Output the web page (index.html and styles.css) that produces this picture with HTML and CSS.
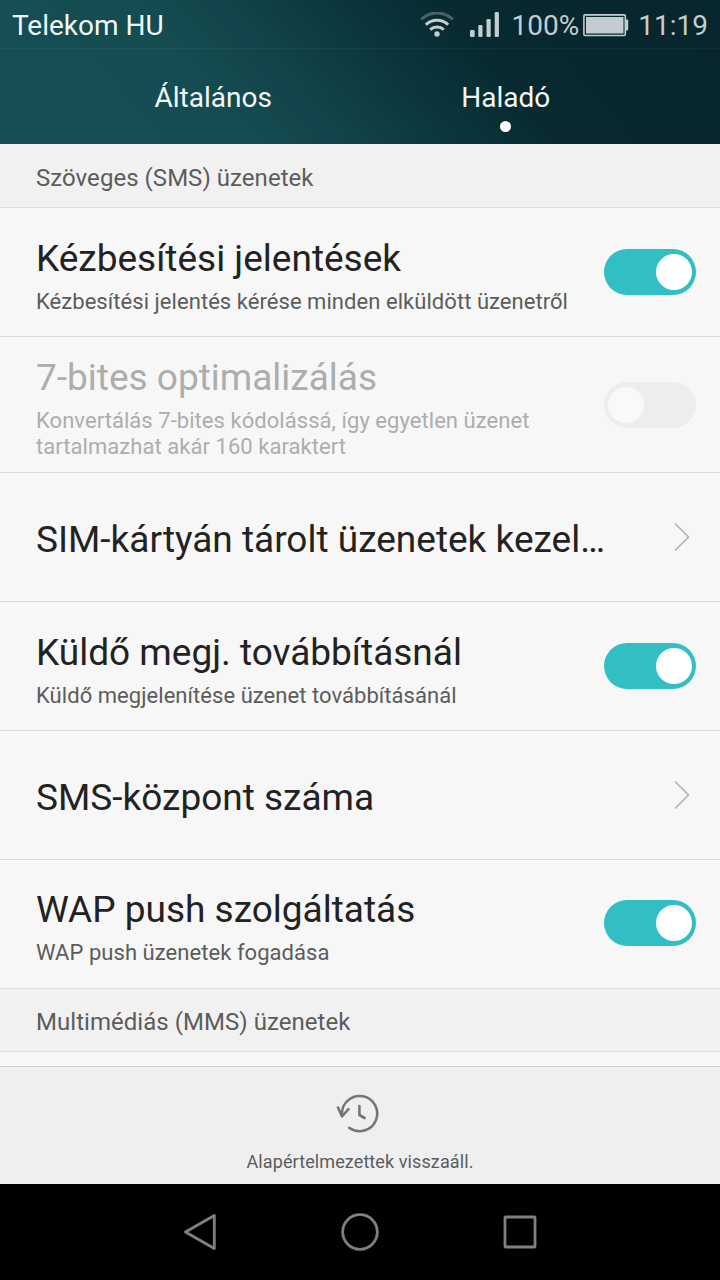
FILE: index.html
```html
<!DOCTYPE html>
<html lang="hu">
  <head>
    <meta charset="UTF-8" />
    <meta name="viewport" content="width=device-width, initial-scale=1.0" />
    <title>Haladó</title>
    <link rel="stylesheet" href="styles.css">
  </head>
  <body>
    <header class="top">
      <div class="status-bar">
        <span class="carrier">Telekom HU</span>
        <svg class="wifi" width="34" height="26" viewBox="0 0 34 26" fill="none" stroke="#c3cdd0" stroke-width="3">
          <path d="M1.2 7.5a22.5 22.5 0 0 1 31.6 0" stroke="#4a6267" />
          <path d="M5.8 12.7a16 16 0 0 1 22.4 0" />
          <path d="M10.2 17.6a10 10 0 0 1 13.6 0" />
          <circle cx="17" cy="22" r="2.7" fill="#c3cdd0" stroke="none" />
        </svg>
        <svg class="signal" width="30" height="26" viewBox="0 0 30 26" fill="#c3cdd0">
          <rect x="0" y="18" width="4.6" height="7" rx="1.2" />
          <rect x="8.3" y="13" width="4.2" height="12" rx="1.2" />
          <rect x="16.5" y="7" width="4.2" height="18" rx="1.2" />
          <rect x="24.7" y="0" width="4.2" height="25" rx="1.2" />
        </svg>
        <span class="percent">100%</span>
        <svg class="battery" width="46" height="23" viewBox="0 0 46 23">
          <rect x="0.9" y="0.9" width="41.4" height="20.6" rx="1" fill="none" stroke="#c3cdd0" stroke-width="1.6" />
          <rect x="3" y="3" width="37.5" height="16.5" fill="#c3cdd0" />
          <path d="M43 5.5h1.2q1 0 1 1v9q0 1-1 1H43z" fill="#c3cdd0" />
        </svg>
        <span class="clock">11:19</span>
      </div>
      <nav class="tabs">
        <a class="tab">Általános</a>
        <a class="tab active">Haladó</a>
      </nav>
    </header>

    <main class="list">
      <h2 class="section">Szöveges (SMS) üzenetek</h2>

      <div class="row">
        <div class="text">
          <div class="title">Kézbesítési jelentések</div>
          <div class="summary">Kézbesítési jelentés kérése minden elküldött üzenetről</div>
        </div>
        <span class="switch on"></span>
      </div>

      <div class="row tall disabled">
        <div class="text">
          <div class="title">7-bites optimalizálás</div>
          <div class="summary">Konvertálás 7-bites kódolássá, így egyetlen üzenet tartalmazhat akár 160 karaktert</div>
        </div>
        <span class="switch"></span>
      </div>

      <div class="row link">
        <div class="title">SIM-kártyán tárolt üzenetek kezel…</div>
        <svg class="chevron" width="18" height="30" viewBox="0 0 18 30">
          <path d="M2 1.5L15.5 15L2 28.5" />
        </svg>
      </div>

      <div class="row">
        <div class="text">
          <div class="title">Küldő megj. továbbításnál</div>
          <div class="summary">Küldő megjelenítése üzenet továbbításánál</div>
        </div>
        <span class="switch on"></span>
      </div>

      <div class="row link">
        <div class="title">SMS-központ száma</div>
        <svg class="chevron" width="18" height="30" viewBox="0 0 18 30">
          <path d="M2 1.5L15.5 15L2 28.5" />
        </svg>
      </div>

      <div class="row last">
        <div class="text">
          <div class="title">WAP push szolgáltatás</div>
          <div class="summary">WAP push üzenetek fogadása</div>
        </div>
        <span class="switch on"></span>
      </div>

      <h2 class="section last">Multimédiás (MMS) üzenetek</h2>
    </main>

    <footer class="toolbar">
      <svg class="restore" width="44" height="42" viewBox="0 0 44 42" fill="none" stroke="#757575" stroke-width="2.6" stroke-linecap="round" stroke-linejoin="round">
        <path d="M6 21A17.6 17.6 0 1 1 13.2 34.8" />
        <path d="M2 14.5L6 23.5L12.5 16.2" />
        <path d="M23.4 13V22L28.6 25" />
      </svg>
      <span>Alapértelmezettek visszaáll.</span>
    </footer>

    <div class="nav-bar">
      <svg width="40" height="40" viewBox="0 0 40 40">
        <path d="M34.3 3.5V36.5L5.5 20z" />
      </svg>
      <svg width="40" height="40" viewBox="0 0 40 40">
        <circle cx="20" cy="20" r="17.3" />
      </svg>
      <svg width="40" height="40" viewBox="0 0 40 40">
        <rect x="5" y="5" width="30" height="30" rx="0.5" />
      </svg>
    </div>
  </body>
</html>
```

FILE: styles.css
```css
:root {
  --accent: #32bfc4;
  --surface: #f7f7f7;
  --section: #f1f1f1;
  --divider: #dcdcdc;
  --text: #222;
  --text-soft: #5c5c5c;
  --status: #c3cdd0;
}

* {
  box-sizing: border-box;
}

body {
  margin: 0;
  width: 720px;
  height: 1280px;
  display: flex;
  flex-direction: column;
  overflow: hidden;
  font-family: Roboto, "Noto Sans", sans-serif;
  background-color: var(--surface);
  color: var(--text);
}

/* Status bar and tabs */
.top {
  height: 144px;
  flex: none;
  color: #f2f8f9;
  background: linear-gradient(50deg, #174f54 0%, #154c51 30%, #114349 42%, #0b363d 54%, #07292f 68%, #07252d 100%);
}

.status-bar {
  height: 49px;
  padding: 2px 12px 0;
  display: flex;
  align-items: center;
  font-size: 28px;
  border-bottom: 1px solid rgba(255, 255, 255, 0.04);
}

.carrier {
  margin-right: auto;
}

.wifi {
  margin-right: 16px;
}

.signal {
  margin-right: 12px;
}

.percent,
.clock {
  color: var(--status);
}

.battery {
  margin: 0 9px 0 4px;
}

.tabs {
  display: flex;
  padding: 0 67px;
  height: 95px;
}

.tab {
  flex: 1;
  display: flex;
  flex-direction: column;
  align-items: center;
  padding-top: 32px;
  font-size: 28px;
  line-height: 33px;
}

.tab.active {
  padding-right: 1px;
}

.tab.active::after {
  content: "";
  width: 11px;
  height: 11px;
  margin-top: 7px;
  border-radius: 50%;
  background-color: white;
}

/* Settings list */
.list {
  height: 922px;
  flex: none;
}

.section {
  height: 64px;
  margin: 0;
  padding: 5px 36px 0;
  display: flex;
  align-items: center;
  font-size: 24px;
  font-weight: 400;
  letter-spacing: 0.04px;
  color: var(--text-soft);
  background-color: var(--section);
  border-bottom: 1px solid var(--divider);
}

.section.last {
  height: 63px;
  padding-top: 4px;
}

.row {
  height: 129px;
  padding: 0 24px 0 36px;
  display: flex;
  align-items: center;
  justify-content: space-between;
  border-bottom: 1px solid var(--divider);
}

.row.tall {
  height: 136px;
}

.row.last {
  padding-bottom: 2px;
}

.row.link {
  padding-right: 29px;
}

.row.link .title {
  padding-top: 4px;
}

.text {
  width: 548px;
  padding-top: 6px;
}

.title {
  font-size: 37px;
  line-height: 45px;
  white-space: nowrap;
}

.summary {
  margin-top: 8px;
  font-size: 22px;
  line-height: 26px;
  letter-spacing: 0.05px;
  color: var(--text-soft);
}

.disabled .title,
.disabled .summary {
  color: #adadad;
}

.switch {
  width: 92px;
  height: 46px;
  padding: 5px 4px;
  display: flex;
  border-radius: 23px;
  background-color: #ededed;
}

.switch::before {
  content: "";
  width: 36px;
  height: 36px;
  border-radius: 50%;
  background-color: #f9f9f9;
}

.switch.on {
  justify-content: flex-end;
  background-color: var(--accent);
}

.switch.on::before {
  background-color: white;
}

.chevron path {
  fill: none;
  stroke: #b4b4b4;
  stroke-width: 1.7;
}

/* Bottom action */
.toolbar {
  height: 118px;
  flex: none;
  padding-top: 26px;
  display: flex;
  flex-direction: column;
  align-items: center;
  background-color: #efefef;
  border-top: 1px solid #d0d0d0;
  font-size: 18px;
  line-height: 22px;
  letter-spacing: 0.1px;
  color: var(--text-soft);
}

.restore {
  margin-right: 5px;
}

.toolbar span {
  margin-top: 16px;
}

.nav-bar {
  height: 96px;
  flex: none;
  display: flex;
  align-items: center;
  justify-content: center;
  gap: 120px;
  background-color: black;
}

.nav-bar svg {
  fill: none;
  stroke: #808080;
  stroke-width: 2.8;
  stroke-linejoin: round;
}
```
